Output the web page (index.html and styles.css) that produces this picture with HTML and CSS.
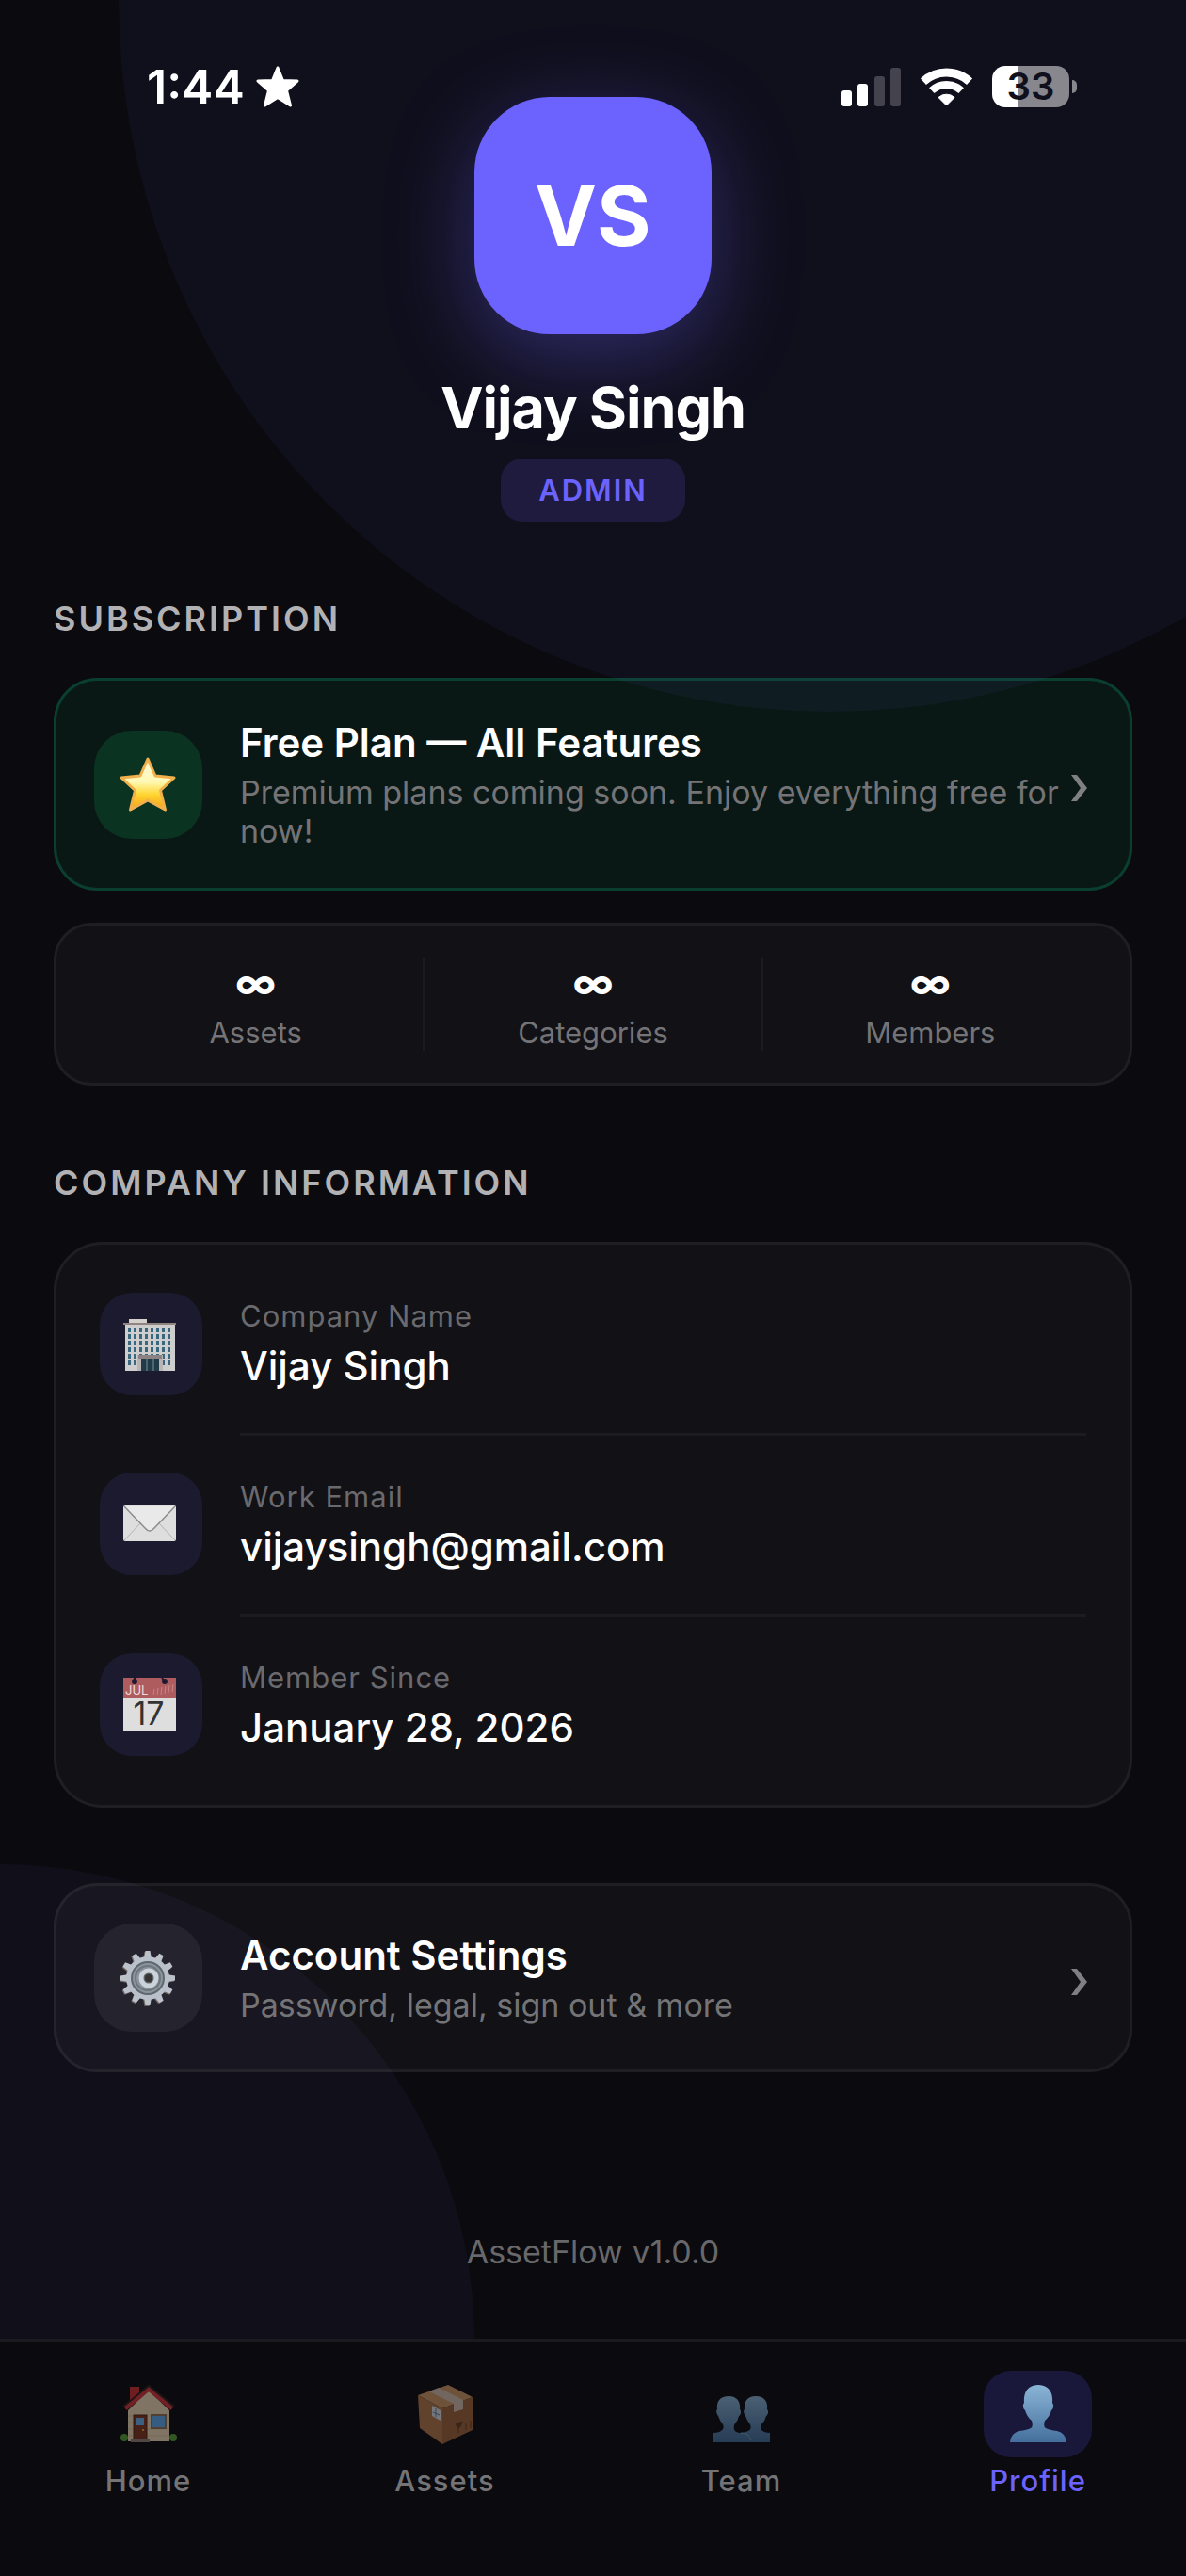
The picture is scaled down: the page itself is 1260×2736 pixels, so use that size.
FILE: index.html
```html
<!DOCTYPE html>
<html lang="en">
<head>
    <meta charset="UTF-8" />
    <meta name="viewport" content="width=device-width, initial-scale=1.0" />
    <title>AssetFlow - Profile</title>
    <link rel="stylesheet" href="styles.css">
</head>
<body>
    <div class="page">
        <div class="status-bar">
            <div class="status-left">
                <span class="time">1:44</span>
                <svg class="status-star" viewBox="0 0 46 44"><path d="M23 2 L28.500 15.500 L44 16 L32.500 26 L36.500 42 L23 33.500 L9.500 42 L13.500 26 L2 16 L17.500 15.500 Z" fill="#fff" stroke="#fff" stroke-width="3" stroke-linejoin="round"/></svg>
            </div>
            <div class="status-right">
                <svg class="signal" viewBox="0 0 63 41" fill="#fff">
                    <rect x="0" y="24" width="11" height="17" rx="3"/>
                    <rect x="17" y="17" width="11" height="24" rx="3"/>
                    <rect x="35" y="9" width="11" height="32" rx="3" opacity=".22"/>
                    <rect x="52" y="0" width="11" height="41" rx="3" opacity=".22"/>
                </svg>
                <svg class="wifi" viewBox="0 0 55 41" fill="none" stroke="#fff">
                    <path d="M2.900 14.700 A36 36 0 0 1 52.100 14.700" stroke-width="9"/>
                    <path d="M11.800 24.200 A23 23 0 0 1 43.200 24.200" stroke-width="8"/>
                    <path d="M27.500 40 L19 31.500 A12.500 12.500 0 0 1 36 31.500 Z" fill="#fff" stroke-width="1" stroke-linejoin="round"/>
                </svg>
                <div class="battery"><span class="battery-level">33</span></div>
            </div>
        </div>

        <main class="content">
            <section class="hero">
                <div class="avatar">VS</div>
                <h1 class="name">Vijay Singh</h1>
                <span class="role">ADMIN</span>
            </section>

            <h2 class="section-title">SUBSCRIPTION</h2>
            <a href="#plans" class="card link-card plan-card">
                <span class="tile tile-green">
                    <svg class="icon" viewBox="1 0 60 60">
                        <defs>
                            <linearGradient id="starFill" x1="0" y1="0" x2="0" y2="1">
                                <stop offset="0" stop-color="#fff6d8"/>
                                <stop offset=".45" stop-color="#fff9b5"/>
                                <stop offset=".7" stop-color="#ffd631"/>
                                <stop offset="1" stop-color="#f79d12"/>
                            </linearGradient>
                        </defs>
                        <path d="M30 3 L38 21 L58 23 L43.500 36.500 L48.500 57 L30 47 L11.500 57 L16.500 36.500 L2 23 L22 21 Z" fill="url(#starFill)" stroke="#f2b04c" stroke-width="3" stroke-linejoin="round"/>
                    </svg>
                </span>
                <span class="card-text">
                    <span class="card-title">Free Plan — All Features</span>
                    <span class="card-desc">Premium plans coming soon. Enjoy everything free for now!</span>
                </span>
                <svg class="chevron" viewBox="0 0 25 36"><path d="M3 8 H9 L20 22 L9 36 H3 L13 22 Z" fill="currentColor"/></svg>
            </a>

            <dl class="card stats">
                <div class="stat"><dd>∞</dd><dt>Assets</dt></div>
                <div class="stat"><dd>∞</dd><dt>Categories</dt></div>
                <div class="stat"><dd>∞</dd><dt>Members</dt></div>
            </dl>

            <h2 class="section-title company-title">COMPANY INFORMATION</h2>
            <div class="card info-card">
                <div class="info-row">
                    <span class="tile tile-purple">
                        <svg class="icon" viewBox="2 0 60 60">
                            <defs>
                                <pattern id="windows" x="6" y="12" width="6" height="7" patternUnits="userSpaceOnUse">
                                    <rect x="1" y="0" width="3" height="5" fill="#38677f"/>
                                </pattern>
                            </defs>
                            <rect x="8" y="3" width="19" height="5" fill="#d5d0cc"/>
                            <rect x="4" y="9" width="53" height="49" fill="#cfcecf"/>
                            <rect x="2" y="7" width="56" height="2" fill="#8f8480"/>
                            <rect x="6" y="12" width="48" height="42" fill="url(#windows)"/>
                            <rect x="17" y="41" width="27" height="17" fill="#b9b5b5"/>
                            <rect x="18" y="41" width="25" height="4" fill="#8b8284"/>
                            <rect x="21" y="45" width="19" height="13" fill="#213b49"/>
                            <path d="M27 45 V58 M34 45 V58" stroke="#7a929d"/>
                        </svg>
                    </span>
                    <div class="info-text">
                        <span class="info-label">Company Name</span>
                        <span class="info-value">Vijay Singh</span>
                    </div>
                </div>
                <div class="info-row">
                    <span class="tile tile-purple">
                        <svg class="icon" viewBox="2 0 60 60">
                            <rect x="2" y="11" width="56" height="38" rx="2" fill="#dedede"/>
                            <path d="M3 48 L20 30 M57 48 L40 30" stroke="#b3b3b3" fill="none"/>
                            <path d="M3 12 L25 35 Q30 41 35 35 L57 12 Z" fill="#e9e9e9"/>
                            <path d="M3 12 L25 35 Q30 41 35 35 L57 12" fill="none" stroke="#8d8d92" stroke-width="1.500"/>
                        </svg>
                    </span>
                    <div class="info-text">
                        <span class="info-label">Work Email</span>
                        <span class="info-value">vijaysingh@gmail.com</span>
                    </div>
                </div>
                <div class="info-row">
                    <span class="tile tile-purple">
                        <svg class="icon" viewBox="2 0 60 60">
                            <rect x="2" y="2" width="56" height="56" fill="#dedede"/>
                            <rect x="2" y="2" width="56" height="21" fill="#ae5c5e"/>
                            <circle cx="14" cy="6" r="3" fill="#1c1930"/>
                            <circle cx="46" cy="6" r="3" fill="#1c1930"/>
                            <path d="M14 2 V6 M43 2 L46 6" stroke="#1c1930" stroke-width="2"/>
                            <path d="M34 20 L35 14 M38 20 L39 13 M42 20 L43 12 M46 19 L47 11 M50 18 L51 10 M54 17 L55 9" stroke="#c98587"/>
                            <text x="4" y="20" font-size="13" fill="#eedede">JUL</text>
                            <text x="29" y="52" font-size="34" text-anchor="middle" fill="#333">17</text>
                        </svg>
                    </span>
                    <div class="info-text">
                        <span class="info-label">Member Since</span>
                        <span class="info-value">January 28, 2026</span>
                    </div>
                </div>
            </div>

            <a href="#settings" class="card link-card settings-card">
                <span class="tile tile-grey">
                    <svg class="icon" viewBox="1 0 60 60">
                        <defs>
                            <path id="tooth" d="M26 10 L27.500 1 H32.500 L34 10 Z"/>
                            <g id="teeth">
                                <use href="#tooth"/>
                                <use href="#tooth" transform="rotate(30 30 30)"/>
                                <use href="#tooth" transform="rotate(60 30 30)"/>
                                <use href="#tooth" transform="rotate(90 30 30)"/>
                                <use href="#tooth" transform="rotate(120 30 30)"/>
                                <use href="#tooth" transform="rotate(150 30 30)"/>
                                <use href="#tooth" transform="rotate(180 30 30)"/>
                                <use href="#tooth" transform="rotate(210 30 30)"/>
                                <use href="#tooth" transform="rotate(240 30 30)"/>
                                <use href="#tooth" transform="rotate(270 30 30)"/>
                                <use href="#tooth" transform="rotate(300 30 30)"/>
                                <use href="#tooth" transform="rotate(330 30 30)"/>
                            </g>
                        </defs>
                        <use href="#teeth" x="-1" y="1" fill="#6f6a68"/>
                        <use href="#teeth" fill="#bcc2ca"/>
                        <circle cx="30" cy="30" r="23" fill="#b9c0c9"/>
                        <circle cx="30" cy="30" r="17" fill="#8b949c" stroke="#5f686e" stroke-width="2"/>
                        <circle cx="30" cy="30" r="13" fill="none" stroke="#6d767d" stroke-width="2"/>
                        <circle cx="31" cy="30" r="8" fill="#5b6268" stroke="#ccd2d9" stroke-width="5"/>
                        <circle cx="31" cy="30" r="4" fill="#363432"/>
                    </svg>
                </span>
                <span class="card-text">
                    <span class="card-title">Account Settings</span>
                    <span class="card-desc">Password, legal, sign out &amp; more</span>
                </span>
                <svg class="chevron" viewBox="0 0 25 36"><path d="M3 8 H9 L20 22 L9 36 H3 L13 22 Z" fill="currentColor"/></svg>
            </a>

            <p class="version">AssetFlow v1.0.0</p>
        </main>

        <nav class="tab-bar">
            <a href="#home" class="tab">
                <span class="tab-icon">
                    <svg class="icon" viewBox="0 0 60 60">
                        <rect x="10" y="1" width="10" height="17" fill="#d6302f"/>
                        <path d="M8 26 L30 5 L52 26 V59 H8 Z" fill="#f5dfb8"/>
                        <path d="M8 32 H52 M8 39 H52 M8 46 H52 M8 53 H52" stroke="#e2cba2"/>
                        <path d="M5 24 L30 3 L55 24" fill="none" stroke="#d8363a" stroke-width="5"/>
                        <path d="M3 22 L30 0 L57 22" fill="none" stroke="#35221f" stroke-width="2"/>
                        <rect x="14" y="31" width="14" height="26" fill="#84361f" stroke="#5b2413"/>
                        <rect x="17" y="34" width="8" height="8" fill="#6eb5f4"/>
                        <circle cx="24" cy="47" r="1" fill="#ffd45e"/>
                        <rect x="33" y="31" width="15" height="14" fill="#62aef2" stroke="#9a7558" stroke-width="2"/>
                        <rect x="11" y="57" width="20" height="3" fill="#92857b"/>
                        <circle cx="4" cy="55" r="4" fill="#58a637"/>
                        <circle cx="56" cy="55" r="4" fill="#58a637"/>
                    </svg>
                </span>
                Home
            </a>
            <a href="#assets" class="tab">
                <span class="tab-icon">
                    <svg class="icon" viewBox="0 0 60 60">
                        <path d="M1 10 L33 -1 L59 12 L27 24 Z" fill="#d49a66"/>
                        <path d="M1 10 L27 24 V62 L3 45 Z" fill="#b87a49"/>
                        <path d="M27 24 L59 12 V47 L27 62 Z" fill="#a2663a"/>
                        <path d="M13 6 L23 2 L49 15 V25 L39 28 V19 Z" fill="#d8c3b0"/>
                        <path d="M16 21 L25 26 V37 L16 32 Z" fill="#e0e4e8"/>
                        <path d="M17 28 L24 31 M20 24 V33" stroke="#5e7f9c"/>
                        <path d="M41 41 L48 38 Q47 44 44 45 Z M44 44 V50 M52 39 V47 M57 37 V45" fill="#6a4023" stroke="#6a4023"/>
                    </svg>
                </span>
                Assets
            </a>
            <a href="#team" class="tab">
                <span class="tab-icon">
                    <svg class="icon" viewBox="0 0 60 60">
                        <defs>
                            <linearGradient id="personFill" x1="0" y1="0" x2="0" y2="1">
                                <stop offset="0" stop-color="#8bb5d6"/>
                                <stop offset="1" stop-color="#446f9c"/>
                            </linearGradient>
                        </defs>
                        <path d="M45 11 C36 11 32 17 33 25 C31 27 33 31 34 32 Q36 38 39 41 Q41 46 37 48 Q33 50 28 50 V60 H60 V50 Q54 50 51 47 Q49 44 51 41 Q55 37 56 32 C58 31 59 27 57 25 C58 17 54 11 45 11 Z" fill="url(#personFill)"/>
                        <path d="M16 11 C7 11 3 17 4 25 C2 27 4 31 5 32 Q7 38 10 41 Q12 46 8 48 Q5 50 0 50 V60 H40 Q38 50 28 50 Q22 49 22 46 Q21 43 23 40 Q26 37 27 32 C29 31 30 27 28 25 C29 17 25 11 16 11 Z" fill="url(#personFill)"/>
                        <path d="M29 50 Q38 50 40 58" fill="none" stroke="#7ea6c6"/>
                    </svg>
                </span>
                Team
            </a>
            <a href="#profile" class="tab active" aria-current="page">
                <span class="tab-icon">
                    <svg class="icon" viewBox="0 0 60 60">
                        <path d="M30 -1 C19 -1 14 7 15 18 C13 20 14 25 16 26 Q18 33 23 37 Q25 43 22 45 Q18 47 10 48 Q1 50 0 60 H60 Q59 50 50 48 Q42 47 38 45 Q35 43 37 37 Q42 33 44 26 C46 25 47 20 45 18 C46 7 41 -1 30 -1 Z" fill="url(#personFill)"/>
                    </svg>
                </span>
                Profile
            </a>
        </nav>
    </div>
</body>
</html>
```
FILE: styles.css
```css
* {
    box-sizing: border-box;
}

body {
    font-family: "Inter", "Liberation Sans", sans-serif;
    background-color: #0a0a0f;
    color: #fff;
    margin: 0;
}

h1, h2, p, dl, dd {
    margin: 0;
}

a {
    color: inherit;
    text-decoration: none;
}

.page {
    position: relative;
    min-height: 100vh;
    display: flex;
    flex-direction: column;
    overflow: hidden;
    isolation: isolate;
}

/* big soft circles behind the content */
.page::before,
.page::after {
    content: "";
    position: absolute;
    z-index: -1;
    border-radius: 50%;
}

.page::before {
    width: 120vw;
    height: 120vw;
    top: -60vw;
    right: -30vw;
    background-color: #100f1c;
}

.page::after {
    width: 80vw;
    height: 80vw;
    bottom: -20vw;
    left: -40vw;
    background-color: #110f19;
}

/* status bar lies over the top of the page */
.status-bar {
    position: absolute;
    top: 0;
    left: 0;
    right: 0;
    display: flex;
    justify-content: space-between;
    align-items: center;
    padding: 62px 116px 0 156px;
}

.status-left,
.status-right {
    display: flex;
    align-items: center;
    height: 60px;
}

.status-left {
    gap: 12px;
}

.status-right {
    gap: 21px;
}

.time {
    font-size: 50px;
    font-weight: 600;
    line-height: 62px;
}

.status-star {
    width: 46px;
    height: 44px;
}

.signal {
    width: 63px;
    height: 41px;
}

.wifi {
    width: 55px;
    height: 41px;
}

.battery {
    display: flex;
    align-items: center;
    gap: 3px;
}

.battery::after {
    content: "";
    width: 5px;
    height: 14px;
    border-radius: 0 5px 5px 0;
    background-color: #87878d;
}

.battery-level {
    width: 82px;
    height: 44px;
    border-radius: 14px;
    background: linear-gradient(to right, #fff 33%, #87878d 33%);
    color: #100f1c;
    font-size: 40px;
    font-weight: 600;
    line-height: 44px;
    text-align: center;
}

.content {
    flex: 1;
    padding: 103px 57px 72px;
}

.hero {
    display: flex;
    flex-direction: column;
    align-items: center;
    margin-bottom: 80px;
}

.avatar {
    width: 252px;
    height: 252px;
    border-radius: 80px;
    background-color: #6c63ff;
    box-shadow: 0 23px 90px rgba(108, 99, 255, 0.35);
    font-size: 88px;
    font-weight: 700;
    line-height: 252px;
    text-align: center;
}

.name {
    margin: 40px 0 16px;
    font-size: 61px;
    font-weight: 700;
    line-height: 76px;
    letter-spacing: -1px;
}

.role {
    padding: 14px 40px;
    border-radius: 23px;
    background-color: #1e1b3e;
    color: #6c63ff;
    font-size: 31px;
    font-weight: 600;
    line-height: 39px;
    letter-spacing: 2px;
}

.section-title {
    margin-bottom: 40px;
    color: #b2b2b4;
    font-size: 36px;
    font-weight: 600;
    line-height: 46px;
    letter-spacing: 3px;
}

.company-title {
    margin-top: 80px;
}

.card {
    border: 3px solid rgba(255, 255, 255, 0.06);
    border-radius: 46px;
    background-color: rgba(255, 255, 255, 0.03);
}

.link-card {
    display: flex;
    align-items: center;
    padding: 40px;
}

.plan-card {
    border-color: rgba(16, 185, 129, 0.25);
    background-color: rgba(16, 185, 100, 0.08);
}

.tile {
    flex-shrink: 0;
    display: flex;
    align-items: center;
    justify-content: center;
    width: 115px;
    height: 115px;
    margin-right: 40px;
    border-radius: 40px;
}

.tile-green {
    background-color: #0a3421;
}

.tile-purple {
    width: 109px;
    height: 109px;
    border-radius: 34px;
    background-color: #1b1a2f;
}

.tile-grey {
    background-color: rgba(255, 255, 255, 0.06);
}

.icon {
    width: 60px;
    height: 60px;
    overflow: visible;
}

.card-text {
    flex: 1;
    display: flex;
    flex-direction: column;
    gap: 6px;
}

.card-title {
    font-size: 42px;
    font-weight: 600;
    line-height: 52px;
}

.card-desc {
    color: #747477;
    font-size: 34px;
    line-height: 41px;
}

.chevron {
    flex-shrink: 0;
    width: 25px;
    height: 36px;
    color: #808084;
}

.stats {
    display: flex;
    margin-top: 34px;
    padding: 34px;
    border-radius: 40px;
}

.stat {
    flex: 1;
    display: flex;
    flex-direction: column;
    gap: 6px;
    text-align: center;
}

.stat + .stat {
    border-left: 3px solid #1c1b20;
}

.stat dd {
    font-size: 44px;
    font-weight: 700;
    line-height: 55px;
}

.stat dt {
    color: #747477;
    font-size: 31px;
    line-height: 38px;
}

.info-card {
    padding: 11px 46px;
    border-radius: 52px;
}

.info-row {
    display: flex;
    align-items: center;
}

.info-text {
    flex: 1;
    display: flex;
    flex-direction: column;
    justify-content: center;
    gap: 8px;
    height: 189px;
}

/* divider starts at the text, not under the icon */
.info-row + .info-row .info-text {
    height: 192px;
    border-top: 3px solid #1c1b20;
}

.info-label {
    color: #6a6a6e;
    font-size: 31px;
    line-height: 38px;
    letter-spacing: 1px;
}

.info-value {
    font-size: 42px;
    font-weight: 500;
    line-height: 52px;
}

.settings-card {
    margin-top: 80px;
}

.version {
    margin-top: 170px;
    color: #68686b;
    font-size: 34px;
    line-height: 41px;
    text-align: center;
}

.tab-bar {
    display: flex;
    padding: 31px 0 82px;
    border-top: 3px solid #1a1a1f;
    background-color: #0a0a0f;
}

.tab {
    flex: 1;
    display: flex;
    flex-direction: column;
    align-items: center;
    gap: 6px;
    color: #747477;
    font-size: 31px;
    font-weight: 500;
    line-height: 38px;
    letter-spacing: 1px;
}

.tab-icon {
    display: flex;
    align-items: center;
    justify-content: center;
    width: 115px;
    height: 92px;
    border-radius: 29px;
}

.tab-icon .icon {
    opacity: 0.5;
}

.tab.active {
    color: #6c63ff;
}

.active .tab-icon {
    background-color: #19173a;
}

.tab.active .icon {
    opacity: 1;
}
```
